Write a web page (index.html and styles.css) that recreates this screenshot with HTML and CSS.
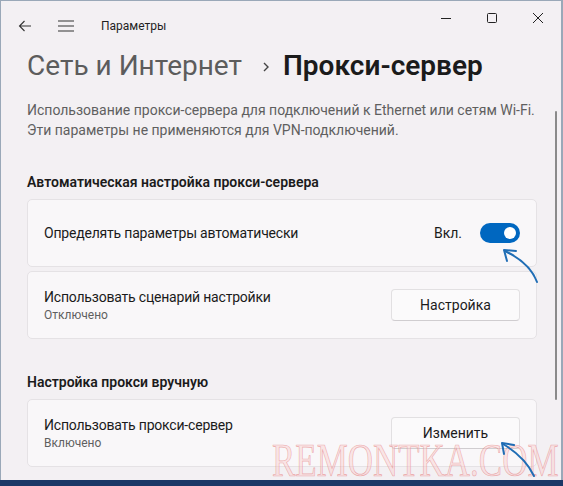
FILE: index.html
```html
<!DOCTYPE html>
<html lang="ru">
<head>
<meta charset="utf-8">
<title>Параметры</title>
<link rel="stylesheet" href="styles.css">
</head>
<body>
<div class="window">
  <header class="titlebar">
    <div class="nav">
      <svg class="back" width="14" height="12" viewBox="0 0 14 12"><path d="M13 6H1.5M6.5 1L1.5 6l5 5" fill="none" stroke="#333" stroke-width="1.1"/></svg>
      <svg class="menu" width="16" height="12" viewBox="0 0 16 12"><path d="M0 1h16M0 6h16M0 11h16" fill="none" stroke="#333" stroke-width="1.1"/></svg>
      <span class="app-title">Параметры</span>
    </div>
    <div class="caption">
      <span class="cap-btn"><svg width="12" height="12" viewBox="0 0 12 12"><path d="M1 6.5h10" stroke="#222" stroke-width="1"/></svg></span>
      <span class="cap-btn"><svg width="12" height="12" viewBox="0 0 12 12"><rect x="1.5" y="1.5" width="9" height="9" rx="1" fill="none" stroke="#222" stroke-width="1"/></svg></span>
      <span class="cap-btn"><svg width="12" height="12" viewBox="0 0 12 12"><path d="M1 1l10 10M11 1L1 11" stroke="#222" stroke-width="1"/></svg></span>
    </div>
  </header>
  <main class="content">
    <h1 class="breadcrumb">
      <span class="parent">Сеть и Интернет</span>
      <svg class="chevron" width="8" height="12" viewBox="0 0 8 12"><path d="M2 2l4 4-4 4" fill="none" stroke="#444" stroke-width="1.4"/></svg>
      <span class="current">Прокси-сервер</span>
    </h1>
    <p class="desc">Использование прокси-сервера для подключений к Ethernet или сетям Wi-Fi.<br>Эти параметры не применяются для VPN-подключений.</p>

    <h2 class="section">Автоматическая настройка прокси-сервера</h2>
    <div class="card">
      <div class="label"><div class="title">Определять параметры автоматически</div></div>
      <div class="control"><span class="state">Вкл.</span><span class="toggle"><span class="knob"></span></span></div>
    </div>
    <div class="card">
      <div class="label"><div class="title">Использовать сценарий настройки</div><div class="sub">Отключено</div></div>
      <div class="control"><span class="button">Настройка</span></div>
    </div>

    <h2 class="section second">Настройка прокси вручную</h2>
    <div class="card">
      <div class="label"><div class="title">Использовать прокси-сервер</div><div class="sub">Включено</div></div>
      <div class="control"><span class="button">Изменить</span></div>
    </div>
  </main>
  <div class="scrollbar"></div>
  <div class="watermark">REMONTKA.COM</div>
  <svg class="arrows" width="563" height="486" viewBox="0 0 563 486">
    <g fill="none" stroke="#1f6db5" stroke-width="2" stroke-linecap="round" stroke-linejoin="round">
      <path d="M537 282Q530 263 505 251"/>
      <path d="M516 251L504 250L507 261"/>
      <path d="M534 476Q525 457 503 444"/>
      <path d="M514 445L502 443L504 454"/>
    </g>
  </svg>
</div>
</body>
</html>
```
FILE: styles.css
```css
html, body {
  margin: 0;
  padding: 0;
}
body {
  width: 563px;
  height: 486px;
  overflow: hidden;
  background: #1b3766;
  font-family: "Segoe UI", Roboto, "Noto Sans", sans-serif;
  color: #1b1b1b;
}
.window {
  position: relative;
  box-sizing: border-box;
  width: 563px;
  height: 480px;
  background: #f3f0f3;
  border-style: solid;
  border-color: #9aa8b8;
  border-width: 1px 2px 0 1px;
  overflow: hidden;
}
.titlebar {
  height: 47px;
  display: flex;
  justify-content: space-between;
}
.nav {
  display: flex;
  align-items: center;
  padding: 3px 0 0 17px;
}
.back { display: block; }
.menu { display: block; margin-left: 26px; }
.app-title {
  margin-left: 27px;
  font-size: 12px;
  color: #1f1f1f;
}
.caption {
  display: flex;
  align-self: flex-start;
}
.cap-btn {
  width: 46px;
  height: 34px;
  display: flex;
  align-items: center;
  justify-content: center;
}
.cap-btn svg { display: block; }
.content {
  padding: 0 24px 0 26px;
}
.breadcrumb {
  margin: 0;
  display: flex;
  align-items: center;
  font-size: 28px;
  line-height: 36px;
  font-weight: 400;
}
.parent { color: #5c5c5c; }
.chevron { margin: 2px 13px 0 20px; display: block; }
.current { font-weight: 600; color: #1b1b1b; }
.desc {
  margin: 16px 0 0;
  font-size: 14px;
  line-height: 20px;
  color: #5f5f5f;
}
.section {
  margin: 32px 0 7px;
  font-size: 14px;
  line-height: 20px;
  font-weight: 600;
  color: #1b1b1b;
}
.section.second { margin-top: 33px; }
.card {
  box-sizing: border-box;
  height: 68px;
  display: flex;
  align-items: center;
  justify-content: space-between;
  padding: 0 16px;
  background: #f9f7f9;
  border: 1px solid #e5e2e5;
  border-radius: 5px;
}
.card + .card { margin-top: 4px; }
.title {
  font-size: 14px;
  line-height: 20px;
  letter-spacing: -0.2px;
  color: #1b1b1b;
}
.sub {
  font-size: 12px;
  line-height: 16px;
  color: #5f5f5f;
}
.control {
  display: flex;
  align-items: center;
}
.state {
  font-size: 14px;
  margin-right: 18px;
}
.toggle {
  box-sizing: border-box;
  width: 40px;
  height: 20px;
  border-radius: 10px;
  background: #0067c0;
  display: flex;
  align-items: center;
  justify-content: flex-end;
  padding-right: 4px;
}
.knob {
  width: 12px;
  height: 12px;
  border-radius: 50%;
  background: #fff;
}
.button {
  box-sizing: border-box;
  width: 129px;
  height: 32px;
  display: flex;
  align-items: center;
  justify-content: center;
  background: #fbfafb;
  border: 1px solid #e2e0e2;
  border-bottom-color: #d0cdd0;
  border-radius: 4px;
  font-size: 14px;
  color: #1b1b1b;
}
.scrollbar {
  position: absolute;
  left: 554px;
  top: 110px;
  width: 2px;
  height: 289px;
  border-radius: 1px;
  background: #8a8a8a;
}
.watermark {
  position: absolute;
  left: 271px;
  top: 437px;
  font-family: "Liberation Serif", serif;
  font-size: 46px;
  line-height: 46px;
  transform: scaleX(0.76);
  transform-origin: left top;
  color: rgba(250, 205, 205, 0.45);
  -webkit-text-stroke: 0.7px rgba(225, 110, 110, 0.55);
  white-space: nowrap;
}
.arrows {
  position: absolute;
  left: -1px;
  top: -1px;
  pointer-events: none;
}
```
